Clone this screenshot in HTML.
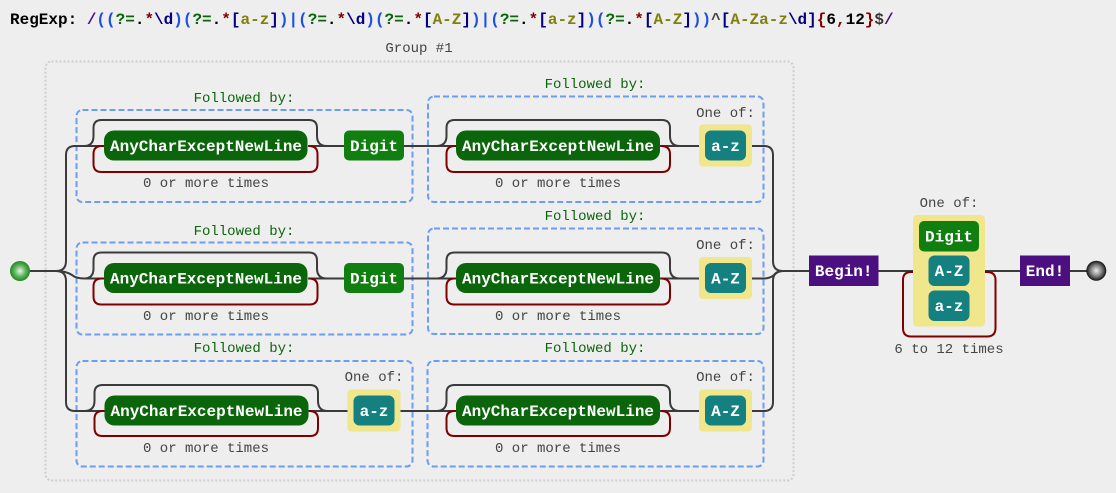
<!DOCTYPE html>
<html><head><meta charset="utf-8"><style>
html,body{margin:0;padding:0;width:1116px;height:493px;overflow:hidden;background:#eee}
svg{display:block}
text{font-family:"Liberation Mono",monospace}
.t{font-size:14px;fill:#444;text-anchor:middle;transform:translateY(-1px)}
.t.n{transform:none}
.f{font-size:14px;fill:#0b650b;text-anchor:middle;transform:translateY(-1px)}
.w{font-size:16px;fill:#fff;font-weight:bold;text-anchor:middle}
.l{fill:none;stroke:#3b3b3b;stroke-width:2}
.r{fill:none;stroke:#800000;stroke-width:2}
.d{fill:none;stroke:#6b9ef0;stroke-width:2;stroke-dasharray:6 3}
.a{fill:#0b650b;rx:10px}.g{fill:#107f10;rx:5px}.c{fill:#148080;rx:6px}.y{fill:#f0e68c;rx:4px}.p{fill:#4b0f80}
.re{font-size:16px;font-weight:bold;white-space:pre}
</style></head><body>
<svg width="1116" height="493" viewBox="0 0 1116 493" xmlns="http://www.w3.org/2000/svg">
<defs>
<radialGradient id="gb"><stop offset="0" stop-color="#e8f4e8"/><stop offset="0.55" stop-color="#62b562"/><stop offset="1" stop-color="#1d8a1d"/></radialGradient>
<radialGradient id="bb"><stop offset="0" stop-color="#eee"/><stop offset="0.6" stop-color="#777"/><stop offset="1" stop-color="#111"/></radialGradient>
</defs>
<rect width="1116" height="493" fill="#eee"/>
<text y="24" class="re"><tspan x="10" fill="#000">RegExp: </tspan><tspan fill="#4b0f80">/</tspan><tspan fill="#1d4fe0">((</tspan><tspan fill="#0b650b">?=</tspan><tspan fill="#000">.</tspan><tspan fill="#800000">*</tspan><tspan fill="#000080">\d</tspan><tspan fill="#1d4fe0">)(</tspan><tspan fill="#0b650b">?=</tspan><tspan fill="#000">.</tspan><tspan fill="#800000">*</tspan><tspan fill="#000080">[</tspan><tspan fill="#808010">a-z</tspan><tspan fill="#000080">]</tspan><tspan fill="#1d4fe0">)|(</tspan><tspan fill="#0b650b">?=</tspan><tspan fill="#000">.</tspan><tspan fill="#800000">*</tspan><tspan fill="#000080">\d</tspan><tspan fill="#1d4fe0">)(</tspan><tspan fill="#0b650b">?=</tspan><tspan fill="#000">.</tspan><tspan fill="#800000">*</tspan><tspan fill="#000080">[</tspan><tspan fill="#808010">A-Z</tspan><tspan fill="#000080">]</tspan><tspan fill="#1d4fe0">)|(</tspan><tspan fill="#0b650b">?=</tspan><tspan fill="#000">.</tspan><tspan fill="#800000">*</tspan><tspan fill="#000080">[</tspan><tspan fill="#808010">a-z</tspan><tspan fill="#000080">]</tspan><tspan fill="#1d4fe0">)(</tspan><tspan fill="#0b650b">?=</tspan><tspan fill="#000">.</tspan><tspan fill="#800000">*</tspan><tspan fill="#000080">[</tspan><tspan fill="#808010">A-Z</tspan><tspan fill="#000080">]</tspan><tspan fill="#1d4fe0">))</tspan><tspan fill="#444">^</tspan><tspan fill="#000080">[</tspan><tspan fill="#808010">A-Za-z</tspan><tspan fill="#000080">\d]</tspan><tspan fill="#800000">{</tspan><tspan fill="#000">6</tspan><tspan fill="#800000">,</tspan><tspan fill="#000">12</tspan><tspan fill="#800000">}</tspan><tspan fill="#333">$</tspan><tspan fill="#4b0f80">/</tspan></text>

<text x="419" y="52" class="t n">Group #1</text>
<rect x="45.5" y="61.5" width="748" height="419" rx="6" fill="none" stroke="#cdcdcd" stroke-width="2" stroke-dasharray="2 2"/>

<!-- dashed boxes -->
<rect x="76.5" y="110" width="336" height="92" rx="6" class="d"/>
<rect x="428" y="96.5" width="335.5" height="105.5" rx="6" class="d"/>
<rect x="76.5" y="242.5" width="336" height="92" rx="6" class="d"/>
<rect x="428" y="228.5" width="335.5" height="105.5" rx="6" class="d"/>
<rect x="76.5" y="361" width="336" height="105.5" rx="6" class="d"/>
<rect x="427.5" y="361" width="336" height="105.5" rx="6" class="d"/>

<text x="244" y="103" class="f">Followed by:</text>
<text x="595" y="89" class="f">Followed by:</text>
<text x="244" y="236" class="f">Followed by:</text>
<text x="595" y="221" class="f">Followed by:</text>
<text x="244" y="353" class="f">Followed by:</text>
<text x="595" y="353" class="f">Followed by:</text>

<!-- left connectors -->
<path class="l" d="M30 271H56Q66 271 66 261V155Q66 146 75 146H104"/>
<path class="l" d="M56 271Q66 271 72 275Q76 278.500 84 278.500H104"/>
<path class="l" d="M56 271Q66 271 66 281V402Q66 411 75 411H104"/>

<!-- right connectors -->
<path class="l" d="M752 146H764Q773 146 773 155V261Q773 271 783 271"/>
<path class="l" d="M752 278.500H764Q770 278.500 774 275Q778 271 783 271"/>
<path class="l" d="M752 411H764Q773 411 773 402V281Q773 271 783 271H809"/>

<!-- row lines -->
<path class="l" d="M308 146H344M404 146H456M660 146H699"/>
<path class="l" d="M308 278.500H344M404 278.500H456M660 278.500H699"/>
<path class="l" d="M308 411H348M400 411H456M660 411H699"/>

<!-- loops col 1 -->
<path class="l" d="M84 146Q93.500 146 93.500 136V128Q93.500 120 101.500 120H309Q317 120 317 128V136Q317 146 327 146"/>
<path class="r" d="M104 146H101.500Q93.500 146 93.500 154V164Q93.500 172 101.500 172H309.500Q317.500 172 317.500 164V154Q317.500 146 309 146"/>
<path class="l" d="M84 278.500Q93.500 278.500 93.500 268.500V260.500Q93.500 252.500 101.500 252.500H309Q317 252.500 317 260.500V268.500Q317 278.500 327 278.500"/>
<path class="r" d="M104 278.500H101.500Q93.500 278.500 93.500 286.500V296.500Q93.500 304.500 101.500 304.500H309.500Q317.500 304.500 317.500 296.500V286.500Q317.500 278.500 309 278.500"/>
<path class="l" d="M84 411Q94.500 411 94.500 401V393Q94.500 385 102.500 385H310Q318 385 318 393V401Q318 411 328 411"/>
<path class="r" d="M105 411H102.500Q94.500 411 94.500 419V428Q94.500 436 102.500 436H310Q318 436 318 428V419Q318 411 309 411"/>

<!-- loops col 2 -->
<path class="l" d="M436 146Q446.500 146 446.500 136V128Q446.500 120 454.500 120H662Q670 120 670 128V136Q670 146 680 146"/>
<path class="r" d="M456 146H454.500Q446.500 146 446.500 154V164Q446.500 172 454.500 172H662Q670 172 670 164V154Q670 146 661 146"/>
<path class="l" d="M436 278.500Q446.500 278.500 446.500 268.500V260.500Q446.500 252.500 454.500 252.500H662Q670 252.500 670 260.500V268.500Q670 278.500 680 278.500"/>
<path class="r" d="M456 278.500H454.500Q446.500 278.500 446.500 286.500V296.500Q446.500 304.500 454.500 304.500H662Q670 304.500 670 296.500V286.500Q670 278.500 661 278.500"/>
<path class="l" d="M436 411Q446.500 411 446.500 401V393Q446.500 385 454.500 385H662Q670 385 670 393V401Q670 411 680 411"/>
<path class="r" d="M456 411H454.500Q446.500 411 446.500 419V428Q446.500 436 454.500 436H662Q670 436 670 428V419Q670 411 661 411"/>

<!-- row 1 -->
<rect x="104" y="130.500" width="203.500" height="30" class="a"/><text x="206" y="151" class="w">AnyCharExceptNewLine</text>
<rect x="344" y="130.500" width="60" height="30" class="g"/><text x="374" y="151" class="w">Digit</text>
<text x="206" y="188" class="t">0 or more times</text>
<rect x="456" y="130.500" width="204" height="30" class="a"/><text x="558" y="151" class="w">AnyCharExceptNewLine</text>
<rect x="699" y="124.500" width="53" height="42" class="y"/><rect x="705" y="130.500" width="41" height="30" class="c"/><text x="725.500" y="151" class="w">a-z</text>
<text x="725.500" y="118" class="t">One of:</text>
<text x="558" y="188" class="t">0 or more times</text>

<!-- row 2 -->
<rect x="104" y="263" width="203.500" height="30" class="a"/><text x="206" y="283.500" class="w">AnyCharExceptNewLine</text>
<rect x="344" y="263" width="60" height="30" class="g"/><text x="374" y="283.500" class="w">Digit</text>
<text x="206" y="321" class="t">0 or more times</text>
<rect x="456" y="263" width="204" height="30" class="a"/><text x="558" y="283.500" class="w">AnyCharExceptNewLine</text>
<rect x="699" y="257" width="53" height="42" class="y"/><rect x="705" y="263" width="41" height="30" class="c"/><text x="725.500" y="283.500" class="w">A-Z</text>
<text x="725.500" y="250" class="t">One of:</text>
<text x="558" y="321" class="t">0 or more times</text>

<!-- row 3 -->
<rect x="104.500" y="395.500" width="204" height="30" class="a"/><text x="206.500" y="416" class="w">AnyCharExceptNewLine</text>
<rect x="347.500" y="389.500" width="53" height="42" class="y"/><rect x="353.500" y="395.500" width="41" height="30" class="c"/><text x="374" y="416" class="w">a-z</text>
<text x="374" y="382" class="t">One of:</text>
<text x="206" y="453" class="t">0 or more times</text>
<rect x="456" y="395.500" width="204" height="30" class="a"/><text x="558" y="416" class="w">AnyCharExceptNewLine</text>
<rect x="699" y="389.500" width="53" height="42" class="y"/><rect x="705" y="395.500" width="41" height="30" class="c"/><text x="725.500" y="416" class="w">A-Z</text>
<text x="725.500" y="382" class="t">One of:</text>
<text x="558" y="453" class="t">0 or more times</text>

<!-- right part -->
<path class="l" d="M878 271H914M985 271H1020M1070 271H1087"/>
<path class="r" d="M914 272H911Q903 272 903 280V328Q903 336.500 911 336.500H987Q995.500 336.500 995.500 328V280Q995.500 272 987 272H985"/>
<rect x="809" y="255.500" width="69.500" height="30.500" class="p"/><text x="843.700" y="276" class="w">Begin!</text>
<rect x="913" y="215" width="72" height="111.500" class="y"/>
<rect x="919" y="221" width="60" height="30.500" class="g"/><text x="949" y="241.500" class="w">Digit</text>
<rect x="928.500" y="255.500" width="41" height="30.500" class="c"/><text x="949" y="276" class="w">A-Z</text>
<rect x="928.500" y="290.500" width="41" height="30.500" class="c"/><text x="949" y="311" class="w">a-z</text>
<text x="949" y="208" class="t">One of:</text>
<text x="949" y="354" class="t">6 to 12 times</text>
<rect x="1020" y="255.500" width="50" height="30.500" class="p"/><text x="1045" y="276" class="w">End!</text>

<circle cx="20" cy="271" r="10" fill="url(#gb)"/>
<circle cx="1096.300" cy="270.700" r="10" fill="url(#bb)"/>
</svg>
</body></html>
